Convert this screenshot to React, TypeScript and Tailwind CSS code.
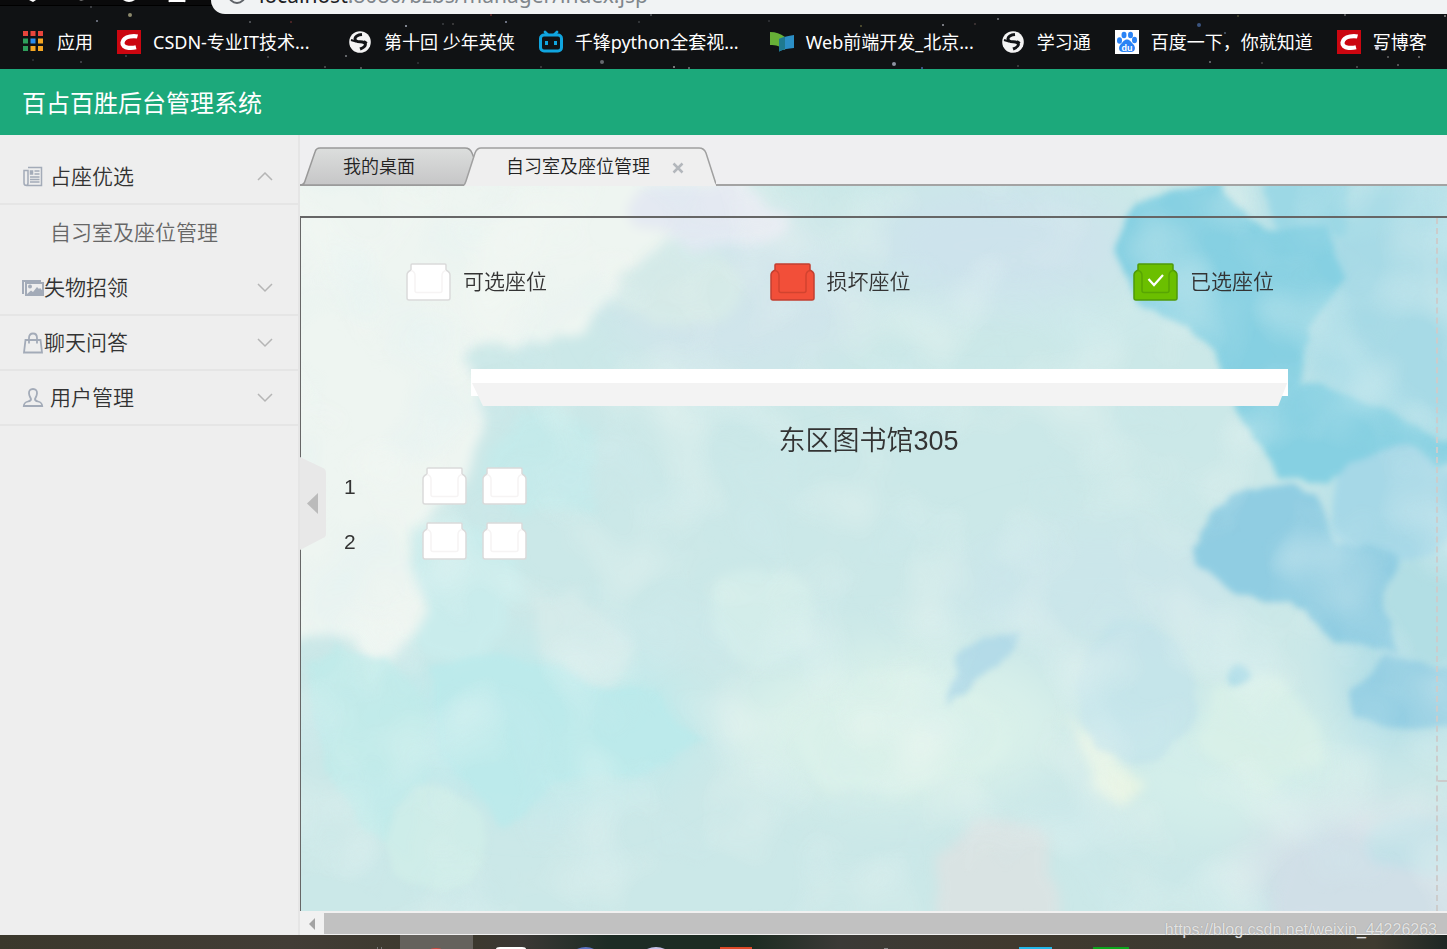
import React, { useState } from 'react';

const UI_FONT = "font-['Noto_Sans','Noto_Sans_CJK_SC',sans-serif]";
const PAGE_FONT = "font-['Liberation_Sans','Noto_Sans_CJK_SC',sans-serif]";

/* ---------- browser chrome ---------- */

// x, y, radius, colour
const STARS: [number, number, number, string][] = [
  [130, 15, 2, '#8d8a6c'], [97, 21, 1, '#7f8494'], [91, 7, 1, '#4a4c50'], [250, 22, 1, '#5d6064'],
  [291, 22, 1, '#5b2a2a'], [406, 26, 1, '#a5abb8'], [443, 24, 1, '#3d4043'], [453, 24, 1, '#444'],
  [346, 56, 1, '#7d8085'], [268, 57, 1, '#4b4b4b'], [126, 56, 1, '#43464a'], [81, 62, 1, '#4a4d52'],
  [33, 60, 1, '#33363a'], [325, 67, 1, '#555'], [361, 68, 1, '#666'], [418, 63, 1, '#33363a'],
  [506, 22, 1, '#8a90a5'], [491, 15, 1, '#6b2d2d'], [639, 22, 1, '#3d4043'], [651, 15, 1, '#55585c'],
  [602, 62, 2, '#65686d'], [674, 67, 1, '#999'], [689, 68, 1, '#777'], [541, 67, 1, '#444'],
  [894, 64, 2, '#8d92a0'], [922, 68, 1, '#4a64a5'], [943, 25, 1, '#9a9da5'], [861, 26, 1, '#5d5a35'],
  [769, 21, 1, '#33363a'], [998, 19, 1, '#77797d'], [975, 24, 1, '#443a3a'], [1199, 25, 2, '#3b5580'],
  [1238, 16, 1, '#4a4c30'], [1210, 62, 1, '#75787d'], [1225, 33, 1, '#4c5c70'], [1377, 48, 2, '#c8ccdd'],
  [1388, 57, 1, '#666'], [1419, 57, 1, '#777'], [1398, 65, 1, '#666'], [1345, 15, 1, '#666'],
  [1262, 63, 1, '#444'], [1357, 67, 1, '#555'], [1445, 16, 1, '#888'], [1018, 66, 1, '#444'],
];

const AppsIcon = () => {
  const colors = ['#e8453c', '#e8453c', '#e8453c', '#2e9e5b', '#2a8cf0', '#f5a623', '#2e9e5b', '#f5a623', '#f5a623'];
  return (
    <svg width="24" height="24" viewBox="0 0 24 24">
      {colors.map((c, i) => (
        <rect key={i} x={2 + (i % 3) * 7.5} y={1 + Math.floor(i / 3) * 7.5} width="5" height="5" fill={c} />
      ))}
    </svg>
  );
};

const CsdnIcon = () => (
  <svg width="24" height="24" viewBox="0 0 24 24">
    <rect width="24" height="24" fill="#cb0610" />
    <path d="M20.500 6.500c-2-.5-5-.5-7.500 0-4.500.8-7 3-7.500 6-.4 3 2 5 6 5.300 2.500.2 5 .1 7.500-.5" fill="none" stroke="#fff" strokeWidth="4.200" />
  </svg>
);

const GlobeIcon = () => (
  <svg width="24" height="24" viewBox="0 0 24 24">
    <circle cx="12" cy="12" r="10.800" fill="#f4f4f4" />
    <path
      d="M14 4.500c-3 .3-6.500 1.500-7 4-.3 2.300 2 3.200 5 3.300 3.500.1 5.800 1 5.300 3.200-.4 1.800-2.800 3-5.300 4"
      fill="none"
      stroke="#121417"
      strokeWidth="3"
    />
    <path d="M3 10l5 1.500M16 11l3 2" stroke="#121417" strokeWidth="2" />
  </svg>
);

const BiliIcon = () => (
  <svg width="24" height="24" viewBox="0 0 24 24" fill="none" stroke="#10a5df" strokeWidth="3">
    <rect x="1.500" y="5" width="21" height="16" rx="3.500" />
    <path d="M6 2l2.500 2.500M18 2l-2.500 2.500" strokeWidth="2.800" strokeLinecap="round" />
    <path d="M7.500 11v4M16.500 11v4" />
  </svg>
);

const BookIcon = () => (
  <svg width="24" height="24" viewBox="0 0 24 24">
    <path d="M0 2c6 0 10 1.500 15 5v13c-5-4-9-5-15-5z" fill="#67b037" />
    <path d="M9 9c5-2.500 9-3 15-4v13c-6 .5-10 1-15 3.500z" fill="#2c8fc6" />
    <path d="M9 9c2-1 4-1.600 6-2.200V19c-2 .5-4 1.300-6 2.500z" fill="#1f7a8f" />
  </svg>
);

const BaiduIcon = () => (
  <svg width="24" height="24" viewBox="0 0 24 24">
    <rect width="24" height="24" fill="#fff" />
    <g fill="#2a83f5">
      <ellipse cx="4.500" cy="10.500" rx="2.500" ry="3.200" />
      <ellipse cx="9" cy="5" rx="2.500" ry="3.300" />
      <ellipse cx="15.500" cy="5" rx="2.500" ry="3.300" />
      <ellipse cx="19.500" cy="10" rx="2.500" ry="3.200" />
      <path d="M12 9.500c3 0 4 2.500 6 4.500 3.500 3.500 2 8-2 8-1.500 0-2.500-.3-4-.3s-2.500.3-4 .3c-4 0-5.500-4.500-2-8 2-2 3-4.500 6-4.500z" />
    </g>
    <text x="12" y="21" textAnchor="middle" fontSize="9" fontWeight="bold" fill="#fff" fontFamily="Liberation Sans">du</text>
  </svg>
);

const BOOKMARKS = [
  { label: '应用', icon: <AppsIcon /> },
  { label: 'CSDN-专业IT技术...', icon: <CsdnIcon />, wide: true },
  { label: '第十回 少年英侠', icon: <GlobeIcon /> },
  { label: '千锋python全套视...', icon: <BiliIcon />, wide: true },
  { label: 'Web前端开发_北京...', icon: <BookIcon />, wide: true },
  { label: '学习通', icon: <GlobeIcon /> },
  { label: '百度一下，你就知道', icon: <BaiduIcon /> },
  { label: '写博客', icon: <CsdnIcon /> },
];

const BrowserChrome = () => (
  <div className={`relative shrink-0 overflow-hidden bg-[#101214] text-white ${UI_FONT}`}>
    <svg className="absolute inset-0 h-full w-full">
      <rect width="100%" height="5" fill="#0a0a0b" />
      <rect y="5" width="100%" height="1" fill="#000" />
      {STARS.map(([x, y, r, c]) => (
        <circle key={`${x}-${y}`} cx={x} cy={y} r={r} fill={c} />
      ))}
      <g fill="#fff">
        <path d="M29 0h7l-3 2zM169 0h16a1 1 0 0 1-1 2h-14a1 1 0 0 1-1-2z" />
        <path d="M123 0h12q-6 4-12 0z" />
        <path d="M79 0h5l-3 1z" fill="#777" />
      </g>
    </svg>
    <div className="relative flex h-[14px] pl-[211px]">
      <div className="flex flex-1 items-end overflow-hidden rounded-bl-[20px] bg-[#f1f3f4] pl-4">
        <svg className="mr-3 h-[14px] w-5 shrink-0" viewBox="0 0 20 14">
          <circle cx="10" cy="-5" r="8" fill="none" stroke="#5f6368" strokeWidth="2" />
        </svg>
        <span className="text-[21px] leading-[38px] whitespace-nowrap text-[#80868b]">
          <span className="text-[#202124]">localhost</span>:8080/bzbs/manager/index.jsp
        </span>
      </div>
    </div>
    <nav className="relative flex h-[55px] items-center gap-6 pl-[21px]">
      {BOOKMARKS.map((b) => (
        <a key={b.label} href="#" className="flex shrink-0 items-center gap-3">
          {b.icon}
          <span className={`text-[18px] leading-6 whitespace-nowrap ${b.wide ? 'w-[171px]' : ''}`}>{b.label}</span>
        </a>
      ))}
    </nav>
  </div>
);

/* ---------- sidebar ---------- */

const NewsIcon = () => (
  <svg width="22" height="22" viewBox="0 0 22 22" fill="none" stroke="#a3abb8" strokeWidth="1.500">
    <path d="M6 1.500h13.500v18h-15q-2.500 0-2.500-2.500V4.500h4V17q0 2.500-2 2.500" />
    <path d="M12.500 5h5M12.500 8h5M8 11h9.500M8 13.500h9.500M8 16h9.500" />
    <rect x="8.500" y="5" width="2" height="3" fill="#a3abb8" />
  </svg>
);

const PictureIcon = () => (
  <svg width="22" height="22" viewBox="0 0 22 22">
    <path d="M1 17V4h18" fill="none" stroke="#a3abb8" strokeWidth="2" />
    <rect x="4" y="6" width="17" height="12" fill="#eee" stroke="#a3abb8" strokeWidth="2" />
    <circle cx="8" cy="9.500" r="2" fill="#a3abb8" />
    <path d="M5 17l4-3.500 2 1.500 4-5 2 2 1-1 3 3v3z" fill="#a3abb8" />
  </svg>
);

const BagIcon = () => (
  <svg width="22" height="22" viewBox="0 0 22 22" fill="none" stroke="#a3abb8" strokeWidth="1.800">
    <path d="M3.500 8h15L20 20.500H2z" />
    <path d="M7 11.500V6q0-4.500 4-4.500T15 6v5.500" />
  </svg>
);

const UserIcon = () => (
  <svg width="22" height="22" viewBox="0 0 22 22" fill="none" stroke="#a3abb8" strokeWidth="1.800">
    <path d="M11 2c3 0 4.200 2 4 4.500-.2 2.500-1.500 4-2 5.500-.2 1.500 1 2 3 2.500 3 .8 4 1.500 4.200 4.500H1.800c.2-3 1.200-3.700 4.200-4.500 2-.5 3.200-1 3-2.500-.5-1.500-1.800-3-2-5.500C6.800 4 8 2 11 2z" />
  </svg>
);

const Chevron = ({ open }: { open: boolean }) => (
  <svg width="16" height="10" viewBox="0 0 16 10" fill="none" stroke="#b5b5b5" strokeWidth="1.500">
    <path d={open ? 'M1 8l7-7 7 7' : 'M1 1l7 7 7-7'} />
  </svg>
);

const MENU = [
  { label: '占座优选', icon: <NewsIcon />, spaced: true, children: ['自习室及座位管理'] },
  { label: '失物招领', icon: <PictureIcon />, spaced: false, children: [] },
  { label: '聊天问答', icon: <BagIcon />, spaced: false, children: [] },
  { label: '用户管理', icon: <UserIcon />, spaced: true, children: [] },
];

const Sidebar = () => {
  const [open, setOpen] = useState('占座优选');
  return (
    <aside className="w-[300px] shrink-0 border-r-2 border-[#e5e5e5] bg-[#eee] pt-[15px] text-[21px] font-[350] text-[#333]">
      {MENU.map((item) => (
        <div key={item.label}>
          <button
            onClick={() => setOpen(open === item.label ? '' : item.label)}
            className="flex h-[55px] w-full items-center border-b-2 border-[#e5e5e5] pr-[25px] pl-[22px]"
          >
            {item.icon}
            <span className={item.spaced ? 'pl-[6px]' : ''}>{item.label}</span>
            <span className="ml-auto">
              <Chevron open={open === item.label} />
            </span>
          </button>
          {open === item.label &&
            item.children.map((c) => (
              <a key={c} href="#" className="flex h-[56px] items-center pl-[50px] text-[#666]">
                {c}
              </a>
            ))}
        </div>
      ))}
    </aside>
  );
};

/* ---------- tabs ---------- */

const TabBar = () => (
  <div className="flex h-[51px] items-end border-b-2 border-[#a3a3a3] bg-[#efeff1] text-[18px] font-[350] text-[#222]">
    <button className="relative -mb-[2px] h-[39px] w-[176px] pt-[2px] pl-[43px] text-left">
      <svg className="absolute inset-0" width="176" height="39" viewBox="0 0 176 39">
        <defs>
          <linearGradient id="tabIdle" x2="0" y2="1">
            <stop offset="0" stopColor="#dcdedd" />
            <stop offset="1" stopColor="#c6c6c7" />
          </linearGradient>
        </defs>
        <path d="M0 38q4 0 5-4L15 5q1-4 5-4h145q5 0 7 5l4 10v22z" fill="url(#tabIdle)" stroke="#999" strokeWidth="1.500" />
      </svg>
      <span className="relative">我的桌面</span>
    </button>
    <div className="relative -mb-[2px] -ml-3 flex h-[39px] w-[252px] items-center pt-[2px] pl-[42px]">
      <svg className="absolute inset-0" width="252" height="39" viewBox="0 0 252 39">
        <path d="M0 39L10 10 12 5q1-4 5-4h218q5 0 7 5l8 27q1 4 3 6z" fill="#efefef" />
        <path d="M0 38q1-1 2-4L11 6q2-5 6-5h218q5 0 7 5l9 28q1 4 4 4" fill="none" stroke="#a0a0a0" strokeWidth="1.500" />
      </svg>
      <button className="relative">自习室及座位管理</button>
      <button aria-label="关闭" className="relative ml-[22px]">
        <svg width="12" height="12" viewBox="0 0 12 12" stroke="#b3b7bc" strokeWidth="2.500">
          <path d="M1.500 1.500l9 9M10.500 1.500l-9 9" />
        </svg>
      </button>
    </div>
  </div>
);

/* ---------- seat canvas ---------- */

const Watercolor = () => (
  <svg className="absolute inset-0 h-full w-full" viewBox="0 0 1147 725" preserveAspectRatio="none">
    <defs>
      <filter id="wash" x="-5%" y="-5%" width="110%" height="110%">
        <feTurbulence type="fractalNoise" baseFrequency="0.02" numOctaves="3" seed="4" />
        <feDisplacementMap in="SourceGraphic" scale="24" xChannelSelector="R" yChannelSelector="G" />
        <feGaussianBlur stdDeviation="3" />
      </filter>
      <filter id="faint" x="-5%" y="-5%" width="110%" height="110%">
        <feTurbulence type="fractalNoise" baseFrequency="0.018" numOctaves="3" seed="9" />
        <feDisplacementMap in="SourceGraphic" scale="40" xChannelSelector="R" yChannelSelector="G" />
        <feGaussianBlur stdDeviation="6" />
      </filter>
      <filter id="soft" x="-20%" y="-20%" width="140%" height="140%">
        <feGaussianBlur stdDeviation="22" />
      </filter>
      {/* light and dark mottling laid over the whole sheet */}
      <filter id="mottleLight" x="0" y="0" width="100%" height="100%">
        <feTurbulence type="fractalNoise" baseFrequency="0.012" numOctaves="2" seed="12" />
        <feColorMatrix values="0 0 0 0 0.93  0 0 0 0 0.96  0 0 0 0 0.92  2.4 0 0 0 -1.1" />
      </filter>
      <filter id="mottleDark" x="0" y="0" width="100%" height="100%">
        <feTurbulence type="fractalNoise" baseFrequency="0.012" numOctaves="2" seed="31" />
        <feColorMatrix values="0 0 0 0 0.66  0 0 0 0 0.86  0 0 0 0 0.9  0 2.4 0 0 -1.1" />
      </filter>
    </defs>
    <rect width="1147" height="725" fill="#cbe8e8" />
    <g filter="url(#soft)">
      <ellipse cx="438" cy="110" rx="130" ry="80" fill="#d0e5eb" />
      <ellipse cx="700" cy="60" rx="130" ry="60" fill="#cde3ec" />
      <path d="M960-20h210v320h-90L990 180z" fill="#a9dce7" />
      <path d="M1020 260h140v300h-110z" fill="#b4dfe7" />
      <ellipse cx="600" cy="540" rx="170" ry="80" fill="#d8f0ea" />
      <ellipse cx="800" cy="400" rx="150" ry="60" fill="#cbe6ea" />
      <ellipse cx="930" cy="580" rx="120" ry="70" fill="#d3eeea" />
      <ellipse cx="1070" cy="680" rx="130" ry="60" fill="#cfdfe7" />
      <ellipse cx="240" cy="540" rx="160" ry="80" fill="#c1eaeb" />
    </g>
    <g filter="url(#faint)">
      <ellipse cx="370" cy="100" rx="75" ry="38" fill="#d5eae8" />
      <path d="M-20-20H450L465 47 390 57 320 81 302 135 240 154 160 170 188 200 180 265 150 320 110 355 118 400 112 470 75 500 60 455-20 460z" fill="#eef5f1" />
      <ellipse cx="410" cy="30" rx="80" ry="34" fill="#e4e9f2" />
      <ellipse cx="245" cy="280" rx="52" ry="56" fill="#c4eaea" />
      <path d="M115 350l60-15 50 20-10 100-60 30-40-30z" fill="#c9ecec" />
      <path d="M225 410l60-10 40 60-20 50-70-40z" fill="#dcedeb" opacity=".6" />
      <ellipse cx="465" cy="435" rx="48" ry="58" fill="#d3edea" />
      <ellipse cx="600" cy="550" rx="105" ry="60" fill="#daf1ea" />
      <path d="M635 710l5-45 40-40 60 20 20 100H650z" fill="#d9e3e3" />
      <path d="M960 735l30-70 70-40 60 50 60-10v90z" fill="#d0dfe7" />
      <ellipse cx="1120" cy="655" rx="50" ry="32" fill="#c2e1e8" />
      <path d="M910 500l60-15 50 40 10 60-70 10-60-30z" fill="#d8f0e8" />
      <path d="M775 540l35 10 35 40-20 35-35-20z" fill="#e7f4e4" />
    </g>
    <g filter="url(#wash)">
      <path d="M7 480L35 455 90 470 125 520 128 590 110 670 60 650 25 580z" fill="#bfebea" opacity=".85" />
      <path d="M135 480l70-15 70 35 80 5 50 50-60 30-90 10-50 45-70-75z" fill="#b9e9eb" opacity=".75" />
      <ellipse cx="137" cy="655" rx="52" ry="52" fill="#d0eee9" opacity=".8" />
      <ellipse cx="837" cy="505" rx="58" ry="72" fill="#c3e4ea" opacity=".8" />
      <path d="M648 515l6-40 30-25 36-3-14 32-32 12z" fill="#b0d9e8" opacity=".9" />
      <circle cx="940" cy="488" r="10" fill="#9fd6e4" />
      <path d="M960-10h90l-5 60-60 10z" fill="#9cd8e5" />
      <path d="M1040 60l70-20 60 60v140l-70-30-50-60z" fill="#a6dae6" opacity=".8" />
      <path d="M832 23L876 0 920 0 966 40 1022 38 1047 91 1007 140 1000 198 1080 217 1150 256V275L1073 278 1022 298 981 290 944 237 925 188 886 135 835 110 814 67z" fill="#86d0e2" />
      <ellipse cx="1096" cy="318" rx="66" ry="56" fill="#a6d8e7" />
      <ellipse cx="1134" cy="420" rx="50" ry="55" fill="#b2dee4" />
      <path d="M935 312Q970 285 1012 305L1040 353 1105 372 1085 411 1096 470 1048 460 1018 440 985 415 935 410 896 372 902 335z" fill="#90cde2" />
      <path d="M1050 505l35-30 80 0v65h-80l-32-10z" fill="#95cfe3" />
    </g>
    <rect width="1147" height="725" filter="url(#mottleLight)" opacity=".35" />
    <rect width="1147" height="725" filter="url(#mottleDark)" opacity=".25" />
  </svg>
);

const SEAT_STYLES = {
  free: { fill: '#fff', edge: '#dadada', inner: '#f6f4f4' },
  broken: { fill: '#f24f39', edge: '#c23f30', inner: '#d2432f' },
  picked: { fill: '#6bbf00', edge: '#4f9a08', inner: '#58a503' },
};

const Seat = ({ kind }: { kind: keyof typeof SEAT_STYLES }) => {
  const s = SEAT_STYLES[kind];
  return (
    <svg width="45" height="38" viewBox="0 0 45 38" strokeWidth="1.500">
      <path
        d="M6 1h33q1 0 1 1v5q4 2 4 5v23q0 2-2 2H3q-2 0-2-2V12q0-3 4-5V2q0-1 1-1z"
        fill={s.fill}
        stroke={s.edge}
        strokeLinejoin="round"
      />
      <path d="M5 7.500q4 1 4 5v15q0 2 2 2h23q2 0 2-2v-15q0-4 4-5" fill="none" stroke={s.inner} />
      {kind === 'picked' && <path d="M15.500 16l5.500 6 9-10" fill="none" stroke="#fff" strokeWidth="2.200" />}
    </svg>
  );
};

const LEGEND: { kind: keyof typeof SEAT_STYLES; label: string }[] = [
  { kind: 'free', label: '可选座位' },
  { kind: 'broken', label: '损坏座位' },
  { kind: 'picked', label: '已选座位' },
];

const SeatRow = ({ row }: { row: number }) => {
  const [picked, setPicked] = useState<number[]>([]);
  const toggle = (n: number) => setPicked(picked.includes(n) ? picked.filter((p) => p !== n) : [...picked, n]);
  return (
    <div className="flex h-[55px] pl-[43px]">
      <span className="w-[78px] text-[21px] leading-10">{row}</span>
      <div className="flex items-start gap-[15px]">
        {[1, 2].map((n) => (
          <button key={n} aria-label={`${row}排${n}座`} onClick={() => toggle(n)}>
            <Seat kind={picked.includes(n) ? 'picked' : 'free'} />
          </button>
        ))}
      </div>
    </div>
  );
};

const SeatCanvas = () => (
  <div className="relative flex flex-1 flex-col overflow-hidden font-[350] text-[#333]">
    <Watercolor />
    <div className="relative mt-[30px] flex flex-1 border-t-2 border-l border-[#666]">
      <div className="flex-1 border-r-2 border-dashed border-r-[#ccc]">
        <div className="flex justify-between pt-[45px] pr-[162px] pl-[105px] text-[21px]">
          {LEGEND.map((l) => (
            <div key={l.kind} className="flex h-[38px] items-center gap-3">
              <Seat kind={l.kind} />
              <span>{l.label}</span>
            </div>
          ))}
        </div>
        <svg className="mt-[68px] ml-[15%] h-[37px] w-[72%]" viewBox="0 0 818 37" preserveAspectRatio="none">
          <path d="M0 0h818v27H0z" fill="#fff" />
          <path d="M1 14h816l-9 23H12z" fill="#f3f3f3" />
        </svg>
        <h1 className="pt-3 text-center text-[27px] leading-[46px] font-[350]">东区图书馆305</h1>
        <div className="pt-[3px]">
          <SeatRow row={1} />
          <SeatRow row={2} />
        </div>
      </div>
      <div className="h-[564px] w-[9px] border-b-2 border-dashed border-[#ccc]" />
    </div>
    <button aria-label="收起菜单" className="absolute top-[271px] left-0">
      <svg width="26" height="93" viewBox="0 0 26 93">
        <path d="M0 0l23 11q3 1 3 5v61q0 3-3 4L0 93z" fill="#e8e8e8" />
        <path d="M18 36v21L7 46.500z" fill="#bbb" />
      </svg>
    </button>
  </div>
);

const ScrollBar = () => (
  <div className="flex h-6 shrink-0 bg-[#f1f1f1] pt-[2px] pb-px">
    <button aria-label="向左滚动" className="flex w-6 items-center justify-center">
      <svg width="6" height="12" viewBox="0 0 6 12">
        <path d="M6 0v12L0 6z" fill="#a3a3a3" />
      </svg>
    </button>
    <div className="flex-1 bg-[#c1c1c1]" />
  </div>
);

const TaskBar = () => (
  <div className="h-[14px] shrink-0 overflow-hidden bg-[linear-gradient(90deg,#3b382c,#423d36_20%,#3c382c_32%,#3b3835_36%,#1d2c25_42%,#1d2c22_52%,#3b3a37_58%,#40392e_70%,#3b3a32_85%,#3f3b30_95%,#1e2724)]">
    <svg width="1447" height="14" viewBox="0 0 1447 14">
      <rect x="400" width="73" height="14" fill="#65625d" />
      <path d="M377 12h1v2h-1zM381 12h1v2h-1z" fill="#777" />
      <ellipse cx="436" cy="15" rx="6" ry="2" fill="#d5473c" />
      <path d="M496 14q0-2 4-2h22q4 0 4 2z" fill="#fff" />
      <path d="M577 14q9-4 17 0z" fill="#5d74c4" />
      <path d="M647 14q9-4 18 0z" fill="#c3c1e8" />
      <rect x="720" y="12" width="32" height="2" fill="#dd4a28" />
      <rect x="884" y="13" width="4" height="1" fill="#888" />
      <rect x="1019" y="12" width="33" height="2" fill="#23b8ea" />
      <rect x="1093" y="12" width="36" height="2" fill="#0ba51c" />
    </svg>
  </div>
);

export default function App() {
  return (
    <div className={`relative flex h-screen flex-col overflow-hidden ${PAGE_FONT}`}>
      <BrowserChrome />
      <header className="flex h-[66px] shrink-0 items-center bg-[#1ca97b] pt-[3px] pl-[22px] text-[24px] text-white">
        百占百胜后台管理系统
      </header>
      <div className="flex min-h-0 flex-1">
        <Sidebar />
        <main className="flex min-w-0 flex-1 flex-col">
          <TabBar />
          <SeatCanvas />
          <ScrollBar />
        </main>
      </div>
      <TaskBar />
      <span className="absolute right-[10px] bottom-[7px] text-[16px] text-white/75 [text-shadow:0_0_1px_#888]">
        https://blog.csdn.net/weixin_44226263
      </span>
    </div>
  );
}
